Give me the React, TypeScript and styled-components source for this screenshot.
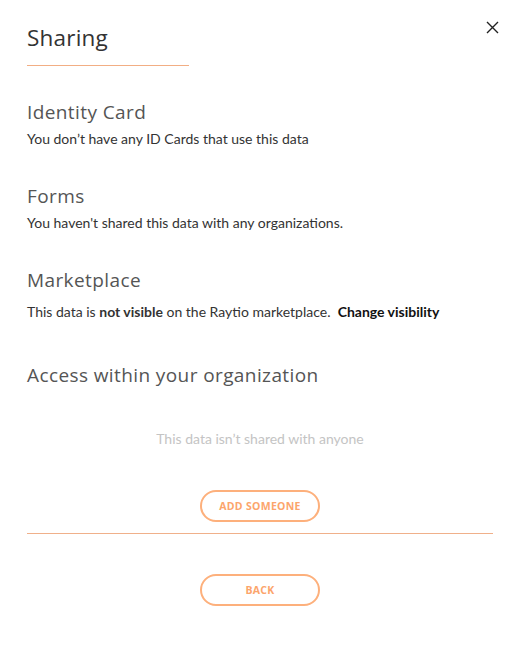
import React from 'react'
import styled, { createGlobalStyle } from 'styled-components'

const GlobalStyle = createGlobalStyle`
  html, body {
    margin: 0;
    padding: 0;
    background: #fff;
  }
  body {
    font-family: Lato, "Open Sans", sans-serif;
  }
`

const sections = [
  { title: 'Identity Card', text: <>You don’t have any ID Cards that use this data</> },
  { title: 'Forms', text: <>You haven't shared this data with any organizations.</> },
]

function App() {
  return (
    <>
      <GlobalStyle />
      <Modal>
        <CloseButton aria-label="close">
          <svg width="13" height="13" viewBox="0 0 13 13">
            <path d="M1 1 L12 12 M12 1 L1 12" stroke="#222" strokeWidth="1.4" />
          </svg>
        </CloseButton>
        <Title>Sharing</Title>

        {sections.map((item, index) => (
          <Section key={index}>
            <Heading>{item.title}</Heading>
            <Text>{item.text}</Text>
          </Section>
        ))}

        <Section>
          <Heading>Marketplace</Heading>
          <Text $spaced>
            This data is <b>not visible</b> on the Raytio marketplace.&nbsp;&nbsp;
            <LinkText>Change visibility</LinkText>
          </Text>
        </Section>

        <Access>
          <Heading>Access within your organization</Heading>
          <Empty>This data isn’t shared with anyone</Empty>
          <Center $gap={43}>
            <PillButton>ADD SOMEONE</PillButton>
          </Center>
        </Access>

        <Divider />

        <Center $gap={40}>
          <PillButton>BACK</PillButton>
        </Center>
      </Modal>
    </>
  )
}

const Modal = styled.div`
  position: relative;
  width: 520px;
  height: 646px;
  box-sizing: border-box;
  padding: 24px 27px 0 27px;
  color: #333;
`

const CloseButton = styled.button`
  position: absolute;
  top: 21px;
  right: 21px;
  padding: 0;
  border: none;
  background: none;
  cursor: pointer;
  display: flex;
`

const Title = styled.h1`
  margin: 0;
  width: 162px;
  padding-bottom: 13px;
  border-bottom: 1px solid #f2ae84;
  font-family: "Open Sans", sans-serif;
  font-weight: 400;
  font-size: 22.5px;
  line-height: 28px;
  color: #333;
  letter-spacing: 0.2px;
`

const Section = styled.section`
  margin-top: 34px;
  & + & {
    margin-top: 37px;
  }
`

const Heading = styled.h2`
  margin: 0;
  font-family: "Open Sans", sans-serif;
  font-weight: 400;
  font-size: 19px;
  line-height: 24px;
  color: #555;
  letter-spacing: 0.4px;
`

const Text = styled.p<{ $spaced?: boolean }>`
  margin: ${p => (p.$spaced ? '11px' : '6px')} 0 0;
  font-family: Lato, sans-serif;
  font-size: 14px;
  line-height: 17px;
  color: #333;
  b {
    font-weight: 700;
  }
`

const LinkText = styled.span`
  font-weight: 700;
  color: #111;
  cursor: pointer;
`

const Access = styled.section`
  margin-top: 43px;
`

const Empty = styled.p`
  margin: 43px 0 0;
  text-align: center;
  font-family: Lato, sans-serif;
  font-size: 14px;
  line-height: 17px;
  color: #c4c4c4;
`

const Center = styled.div<{ $gap: number }>`
  display: flex;
  justify-content: center;
  margin-top: ${p => p.$gap}px;
`

const PillButton = styled.button`
  width: 120px;
  height: 32px;
  box-sizing: border-box;
  border: 2px solid #fdb07c;
  border-radius: 16px;
  background: #fff;
  color: #fca56c;
  font-family: "Open Sans", sans-serif;
  font-weight: 700;
  font-size: 10.5px;
  letter-spacing: 0.3px;
  cursor: pointer;
`

const Divider = styled.hr`
  margin: 11px 0 0;
  border: none;
  border-top: 1px solid #f0b08a;
`

export default App
